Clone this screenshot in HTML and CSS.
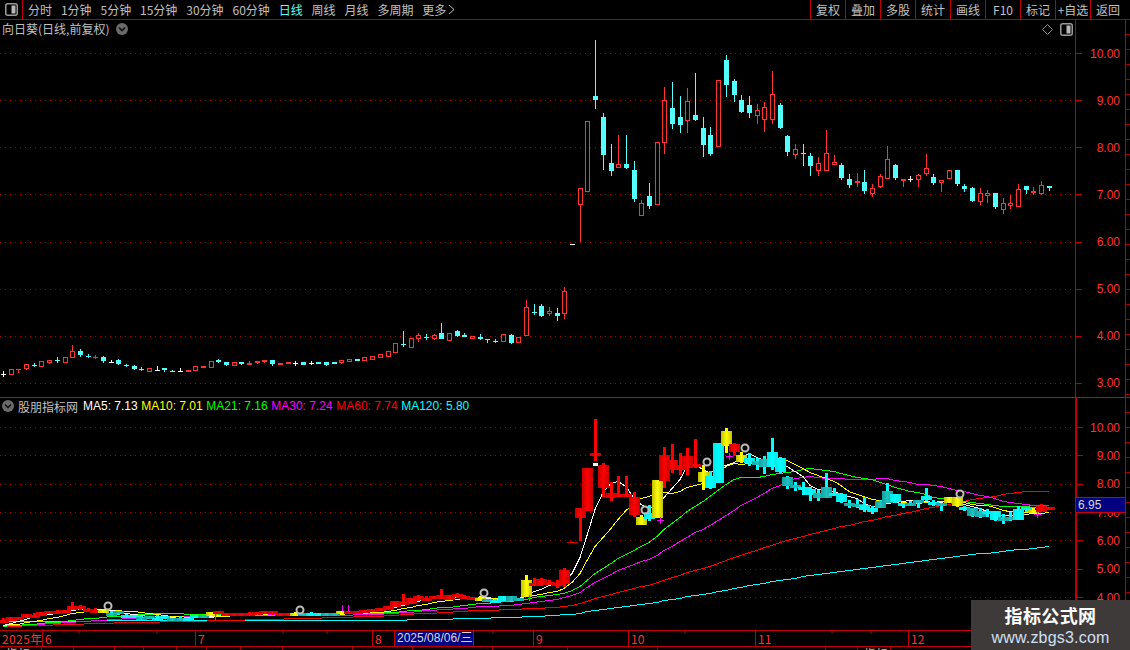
FILE: index.html
```html
<!DOCTYPE html>
<html lang="zh-CN">
<head>
<meta charset="utf-8">
<title>向日葵 日线</title>
<link rel="stylesheet" href="styles.css">
</head>
<body>
<div class="app">
  <header class="toolbar">
    <div class="panel-btn">
      <svg class="toggle" viewBox="0 0 13 13"><rect x="0.75" y="0.75" width="11.5" height="11.5" rx="2" fill="none" stroke="#9a9a9a" stroke-width="1.5"/><rect x="6.5" y="2.5" width="4" height="8" fill="#b8b8b8"/></svg>
    </div>
    <nav class="tabs">
      <span>分时</span><span>1分钟</span><span>5分钟</span><span>15分钟</span><span>30分钟</span><span>60分钟</span>
      <span class="active">日线</span><span>周线</span><span>月线</span><span>多周期</span>
      <span class="more">更多<svg class="more-arrow" viewBox="0 0 7 11"><path d="M1 1l5 4.5L1 10" fill="none" stroke="#c0c0c0"/></svg></span>
    </nav>
    <div class="actions">
      <button>复权</button><button>叠加</button><button>多股</button><button>统计</button><button>画线</button><button>F10</button><button>标记</button><button>+自选</button><button class="last">返回</button>
    </div>
  </header>

  <section class="pane pane-price">
    <div class="plot">
      <svg id="price" class="chart" width="1075" height="377" viewBox="0 20 1075 377"></svg>
      <div class="pane-title">向日葵(日线,前复权)
        <svg class="chev" viewBox="0 0 12 12"><circle cx="6" cy="6" r="6" fill="#6a6a6a"/><path d="M3 4.5l3 3 3-3" fill="none" stroke="#111" stroke-width="1.6"/></svg>
      </div>
      <div class="pane-tools">
        <svg class="diamond" viewBox="0 0 11 11"><path d="M5.5 .5l5 5-5 5-5-5z" fill="none" stroke="#8a8a8a"/></svg>
        <svg class="toggle" viewBox="0 0 13 13"><rect x="0.75" y="0.75" width="11.5" height="11.5" rx="2" fill="none" stroke="#9a9a9a" stroke-width="1.5"/><rect x="6.5" y="2.5" width="4" height="8" fill="#b8b8b8"/></svg>
      </div>
    </div>
    <div class="axis axis-price">
      <div>10.00</div><div>9.00</div><div>8.00</div><div>7.00</div><div>6.00</div><div>5.00</div><div>4.00</div><div>3.00</div>
    </div>
    <div class="edge"></div>
  </section>

  <section class="pane pane-ind">
    <div class="plot">
      <svg id="ind" class="chart" width="1075" height="232" viewBox="0 398 1075 232"></svg>
      <div class="legend">
        <svg class="chev" viewBox="0 0 12 12"><circle cx="6" cy="6" r="6" fill="#6a6a6a"/><path d="M3 4.5l3 3 3-3" fill="none" stroke="#111" stroke-width="1.6"/></svg>
        <span class="legend-name">股朋指标网</span>
        <span class="ma5">MA5: 7.13</span><span class="ma10">MA10: 7.01</span><span class="ma21">MA21: 7.16</span><span class="ma30">MA30: 7.24</span><span class="ma60">MA60: 7.74</span><span class="ma120">MA120: 5.80</span>
      </div>
    </div>
    <div class="axis axis-ind">
      <div>10.00</div><div>9.00</div><div>8.00</div><div>7.00</div><div>6.00</div><div>5.00</div><div>4.00</div>
      <span class="price-tag">6.95</span>
    </div>
    <div class="edge"></div>
  </section>

  <footer class="dates">
    <span class="seg first" style="flex-basis:42px">2025年</span>
    <span class="seg sep" style="flex-basis:153px">6</span>
    <span class="seg sep" style="flex-basis:177px">7</span>
    <span class="seg sep" style="flex-basis:22px">8</span>
    <span class="seg date-tag" style="flex-basis:79px">2025/08/06/三</span>
    <span class="seg sep" style="flex-basis:60px"></span>
    <span class="seg sep" style="flex-basis:95px">9</span>
    <span class="seg sep" style="flex-basis:127px">10</span>
    <span class="seg sep" style="flex-basis:153px">11</span>
    <span class="seg sep" style="flex-basis:222px">12</span>
    <svg class="date-ticks" width="1130" height="3"><path d="M79 0v3M157 0v3M283 0v3M327 0v3M493 0v3M685 0v3M832 0v3M871 0v3" stroke="#c00000"/></svg>
  </footer>
  <div class="subtabs">
    <span style="flex-basis:42px">指标</span><span style="flex-basis:32px">MA</span><span style="flex-basis:41px"></span><span style="flex-basis:29px"></span><span style="flex-basis:33px"></span><span style="flex-basis:30px"></span><span style="flex-basis:34px"></span><span style="flex-basis:42px"></span><span style="flex-basis:70px"></span><span style="flex-basis:60px"></span><span style="flex-basis:80px"></span><span style="flex-basis:75px"></span><span style="flex-basis:90px"></span><span style="flex-basis:168px"></span><span style="flex-basis:32px"></span><span style="flex-basis:33px">指标</span>
  </div>

  <aside class="watermark">
    <div class="wm-title">指标公式网</div>
    <div class="wm-url">www.zbgs3.com</div>
  </aside>
</div>
<script src="chart.js"></script>
</body>
</html>
```

FILE: styles.css
```css
* { box-sizing: border-box; }
html, body { margin: 0; padding: 0; background: #000; }
body { font-family: "Noto Sans CJK SC", "Liberation Sans", sans-serif; font-size: 12px; color: #c0c0c0; }
.app { position: relative; width: 1130px; height: 650px; overflow: hidden; background: #000; display: flex; flex-direction: column; }

.toolbar { height: 20px; flex: none; display: flex; align-items: stretch; border-bottom: 1px solid #b00000; }
.panel-btn { width: 23px; flex: none; border-right: 1px solid #c00000; display: flex; align-items: center; justify-content: center; }
.toggle { width: 13px; height: 13px; display: block; }
.tabs { display: flex; align-items: center; gap: 8.9px; padding-left: 5px; line-height: 19px; white-space: nowrap; }
.tabs .active { color: #54ffff; }
.more { display: flex; align-items: center; gap: 2px; }
.more-arrow { width: 7px; height: 11px; }
.actions { margin-left: auto; display: flex; }
.actions button { width: 35px; height: 19px; padding: 0; border: 0; border-left: 1px solid #c00000; background: none; color: #c0c0c0; font: inherit; line-height: 18px; white-space: nowrap; }
.actions .last { width: 40px; padding-right: 5px; }

.pane { position: relative; display: flex; flex: none; }
.pane-price { height: 378px; border-bottom: 1px solid #e00000; }
.pane-ind { height: 232px; }
.plot { position: relative; width: 1075px; flex: none; }
.chart { display: block; shape-rendering: crispEdges; }

.pane-title { position: absolute; left: 2px; top: 0; display: flex; align-items: center; gap: 7px; line-height: 17px; white-space: nowrap; }
.chev { width: 12px; height: 12px; flex: none; display: block; }
.pane-tools { position: absolute; right: 2px; top: 3px; display: flex; align-items: center; gap: 7px; }
.diamond { width: 11px; height: 11px; display: block; }

.legend { position: absolute; left: 2px; top: 0; display: flex; align-items: center; height: 16px; font-family: "Liberation Sans", sans-serif; white-space: nowrap; }
.legend span { margin-right: 3.6px; }
.legend .legend-name { font-family: "Noto Sans CJK SC", sans-serif; margin: 0 5px 0 4px; }
.ma5 { color: #fff; } .ma10 { color: #ff0; } .ma21 { color: #0f0; } .ma30 { color: #f0f; } .ma60 { color: #f00; } .ma120 { color: #0ff; }

.axis { position: relative; width: 50px; flex: none; border-left: 1px solid #c00000; font-family: "Liberation Sans", sans-serif; color: #ff3232; }
.axis-price { padding-top: 10px; }
.axis-ind { padding-top: 15.4px; border-left-width: 2px; border-left-color: #c00000; }
.axis > div { display: flex; align-items: center; justify-content: space-between; padding-right: 5px; }
.axis-price > div { height: 47.14px; }
.axis-ind > div { height: 28.33px; }
.axis > div::before { content: ""; width: 6px; height: 1px; background: #c00000; }
.price-tag { position: absolute; left: -1px; right: 0; top: 99px; height: 16px; padding-left: 2px; line-height: 14px; background: #000080; color: #d8d8d8; border-top: 1px solid #d00000; border-bottom: 1px solid #d00000; }
.edge { width: 5px; flex: none; border-left: 1px solid #c00000; background: repeating-linear-gradient(#000 0 14px, #a00000 14px 15px); }

.dates { position: relative; height: 17px; flex: none; display: flex; border-top: 1px solid #c00000; border-bottom: 1px solid #c00000; line-height: 15px; color: #ff3232; font-family: "Noto Sans CJK SC", "Liberation Sans", sans-serif; white-space: nowrap; }
.seg { flex: none; padding-left: 2px; overflow: hidden; }
.first { letter-spacing: .4px; }
.sep { border-left: 1px solid #c00000; }
.date-tag { background: #000080; color: #d8d8d8; border-left: 1px solid #c00000; font-family: "Liberation Sans", "Noto Sans CJK SC", sans-serif; }
.date-ticks { position: absolute; left: 0; top: 0; }
.subtabs { height: 3px; flex: none; display: flex; overflow: hidden; line-height: 14px; color: #c0c0c0; }
.subtabs span { flex: none; padding-left: 6px; border-right: 1px solid #a00000; overflow: hidden; white-space: nowrap; }

.watermark { position: absolute; right: 0; bottom: 0; width: 159px; height: 50px; background: #3e3a3a; display: flex; flex-direction: column; align-items: center; padding-top: 4px; }
.wm-title { color: #fff; font-size: 18px; letter-spacing: .4px; font-weight: 700; line-height: 23px; }
.wm-url { color: #d0e0f4; font-family: "Liberation Sans", sans-serif; font-size: 16px; letter-spacing: .2px; line-height: 21px; }
```

FILE: chart.js
```js
(function () {
  // i-th candle: [wickTop, wickBottom, bodyTop, bodyBottom, kind]  (price-pane pixel rows)
  // h = hollow red, c = cyan, w = white doji, r = solid red
  var D = [
    [371,377,374,374,'w'],[369,375,369,375,'h'],[369,373,369,370,'r'],[364,370,364,369,'h'],[363,367,365,365,'c'],[361,367,361,367,'h'],[360,364,360,363,'h'],[357,363,360,360,'c'],[357,363,357,363,'h'],[345,358,351,358,'h'],
    [349,357,351,355,'c'],[354,358,356,356,'c'],[355,359,357,357,'r'],[356,363,357,361,'c'],[360,362,362,362,'w'],[359,365,360,364,'c'],[364,367,365,365,'c'],[365,370,366,369,'c'],[367,371,369,369,'c'],[368,372,368,372,'h'],
    [366,370,370,370,'w'],[368,372,368,370,'c'],[370,371,371,371,'c'],[368,372,371,371,'w'],[370,372,370,372,'r'],[366,371,366,371,'h'],[366,368,366,368,'r'],[361,368,361,368,'h'],[359,363,360,362,'c'],[362,366,362,365,'c'],
    [362,366,362,366,'h'],[362,365,362,364,'c'],[361,365,363,365,'r'],[361,364,361,363,'r'],[360,363,360,362,'r'],[360,366,360,364,'c'],[363,365,363,365,'r'],[362,364,362,364,'r'],[361,366,363,363,'w'],[362,365,362,365,'c'],
    [361,365,363,363,'w'],[362,364,362,364,'c'],[362,366,362,365,'c'],[362,364,362,364,'c'],[360,364,360,363,'h'],[359,362,359,362,'h'],[359,361,359,361,'c'],[357,361,357,361,'h'],[356,360,356,360,'h'],[354,358,354,358,'h'],
    [351,357,351,357,'h'],[343,353,343,353,'h'],[331,347,344,344,'c'],[338,348,338,348,'h'],[333,342,335,339,'h'],[334,340,337,337,'c'],[334,340,335,339,'h'],[323,339,333,339,'c'],[333,341,333,341,'h'],[330,337,331,336,'c'],
    [333,337,335,337,'c'],[336,339,336,339,'h'],[334,340,337,339,'c'],[339,343,339,339,'c'],[339,343,341,341,'c'],[334,342,334,342,'h'],[334,344,335,343,'c'],[337,343,337,343,'h'],[300,336,307,336,'h'],[304,315,312,312,'c'],
    [304,317,306,316,'c'],[307,316,311,314,'h'],[308,321,313,316,'c'],[287,319,291,314,'h'],[244,244,244,245,'w'],[188,242,188,205,'h'],[121,192,121,192,'h'],[40,109,96,100,'c'],[113,170,117,155,'c'],[144,176,163,171,'c'],
    [135,168,164,168,'h'],[135,169,164,168,'c'],[161,202,170,199,'c'],[200,216,203,216,'h'],[183,209,196,206,'c'],[142,205,142,205,'h'],[87,154,100,143,'h'],[82,129,108,124,'c'],[96,133,117,125,'c'],[88,133,101,121,'h'],
    [73,121,115,120,'c'],[117,157,128,145,'c'],[127,156,135,154,'c'],[80,147,80,147,'h'],[55,97,60,85,'c'],[79,102,81,95,'c'],[95,113,100,112,'c'],[96,118,105,113,'c'],[104,124,110,116,'h'],[102,132,107,120,'h'],
    [71,124,94,120,'h'],[103,129,105,128,'c'],[135,156,136,152,'c'],[144,159,149,155,'h'],[144,166,153,153,'c'],[153,176,156,166,'c'],[157,176,163,171,'h'],[130,171,153,171,'h'],[155,165,162,165,'h'],[163,180,165,178,'c'],
    [174,188,179,185,'c'],[173,187,181,183,'h'],[170,194,182,191,'c'],[184,197,188,194,'h'],[174,188,176,187,'h'],[146,179,159,179,'h'],[164,180,165,178,'c'],[179,187,179,181,'r'],[176,182,179,179,'w'],[174,187,175,180,'h'],
    [154,176,168,174,'h'],[174,185,177,183,'c'],[180,192,180,183,'h'],[170,179,170,179,'h'],[170,186,170,184,'c'],[184,192,186,189,'c'],[187,202,188,201,'c'],[188,205,193,202,'h'],[190,203,193,196,'h'],[193,209,193,207,'c'],
    [198,214,203,210,'h'],[195,209,203,206,'h'],[184,207,189,207,'h'],[186,194,186,190,'c'],[187,195,191,193,'r'],[181,195,185,194,'h'],[186,191,186,188,'c']
  ];
  var NS = 'http://www.w3.org/2000/svg';
  var RED = '#ff3232', CYAN = '#54ffff';
  var K = 28.33 / 47.14;
  function cx(i) { return Math.round(3 + 7.69 * i); }
  function low(u) { return 427 + (u - 53) * K; }
  function el(parent, name, attrs) {
    var e = document.createElementNS(NS, name);
    for (var k in attrs) e.setAttribute(k, attrs[k]);
    parent.appendChild(e);
    return e;
  }
  function rect(p, x, y, w, h, fill) { return el(p, 'rect', { x: x, y: y, width: w, height: h, fill: fill }); }
  function grid(svg, y0, step, n) {
    for (var i = 0; i < n; i++) {
      var y = Math.round(y0 + step * i) + 0.5;
      el(svg, 'line', { x1: 0, x2: 1075, y1: y, y2: y, stroke: '#a00000', 'stroke-dasharray': '1 4' });
    }
  }

  /* ---------- price pane ---------- */
  var price = document.getElementById('price');
  grid(price, 53, 47.14, 8);
  D.forEach(function (d, i) {
    var x = cx(i), col = d[4] === 'c' ? CYAN : d[4] === 'w' ? '#fff' : RED;
    rect(price, x, d[0], 1, Math.max(d[1] - d[0], 1), col);
    if (d[4] === 'h') {
      el(price, 'rect', { x: x - 1.5, y: d[2] + 0.5, width: 4, height: Math.max(d[3] - d[2] - 1, 1), fill: '#000', stroke: RED });
    } else {
      rect(price, x - 2, d[2], 5, Math.max(d[3] - d[2], 1), col);
    }
  });

  /* ---------- indicator pane ---------- */
  var ind = document.getElementById('ind');
  var defs = el(ind, 'defs', {});
  function gradient(id, edge, mid) {
    var g = el(defs, 'linearGradient', { id: id });
    el(g, 'stop', { offset: '0', 'stop-color': edge });
    el(g, 'stop', { offset: '0.5', 'stop-color': mid });
    el(g, 'stop', { offset: '1', 'stop-color': edge });
  }
  gradient('g-r', '#c80000', '#ff0000');
  gradient('g-y', '#c0c000', '#ffff00');
  gradient('g-t', '#10a0a0', '#20c0c0');
  gradient('g-c', '#00e8e8', '#00ffff');
  grid(ind, 427, 28.33, 7);

  // moving averages computed from closes, with earlier history padded in
  var closes = [];
  for (var p = 0; p < 120; p++) closes.push(p < 60 ? 367 : 384);
  D.forEach(function (d) {
    closes.push(d[4] === 'h' ? d[2] : d[4] === 'c' ? d[3] : (d[2] + d[3]) / 2);
  });
  [[120, '#00ffff'], [60, '#ff0000'], [30, '#ff00ff'], [21, '#00ff00'], [10, '#ffff00'], [5, '#ffffff']].forEach(function (m) {
    var pts = [];
    D.forEach(function (d, i) {
      var s = 0;
      for (var k = 0; k < m[0]; k++) s += closes[120 + i - k];
      pts.push(cx(i) + ',' + (Math.round(low(s / m[0])) + 0.5));
    });
    el(ind, 'polyline', { points: pts.join(' '), fill: 'none', stroke: m[1], 'stroke-width': 1 });
  });

  function colour(i) {
    var Y = { 13: 1, 27: 1, 38: 1, 44: 1, 62: 1, 68: 1, 83: 1, 85: 1, 91: 1, 94: 1, 96: 1, 123: 1, 124: 1, 134: 1 };
    if (Y[i]) return 'y';
    var cyanRanges = [[14, 26], [39, 43], [63, 67], [84, 84], [92, 93], [97, 122], [125, 133]];
    for (var r = 0; r < cyanRanges.length; r++) {
      if (i >= cyanRanges[r][0] && i <= cyanRanges[r][1]) return (i === 93 || i % 4 < 2) ? 'c' : 't';
    }
    return 'r';
  }
  var WICK = { r: '#ff0000', y: '#ffff00', c: '#00ffff', t: '#00ffff' };
  D.forEach(function (d, i) {
    var x = cx(i), c = colour(i);
    var wt = Math.round(low(d[0])), wb = Math.round(low(d[1]));
    var bt = Math.round(low(d[2])), bb = Math.round(low(d[3]));
    var h = i === 74 ? 1 : Math.max(bb - bt, 3);
    if (wb - wt > 1) rect(ind, x - 1, wt, 3, wb - wt, WICK[c]);
    rect(ind, x - 5, bt, 11, h, 'url(#g-' + c + ')');
  });

  [[108, 606], [300, 610], [484, 593], [645, 510], [707, 462], [745, 448], [960, 494]].forEach(function (m) {
    el(ind, 'circle', { cx: m[0], cy: m[1], r: 3.5, fill: 'none', stroke: '#bdbdbd', 'stroke-width': 2, 'shape-rendering': 'auto' });
  });
  [[660, 520], [729, 456], [1037, 514]].forEach(function (m) {
    rect(ind, m[0] - 3, m[1], 7, 1, '#ff00ff');
    rect(ind, m[0], m[1] - 3, 1, 7, '#ff00ff');
  });
  [[342, 608], [348, 608], [215, 617], [529, 598]].forEach(function (m) {
    rect(ind, m[0], m[1] - 3, 1, 6, '#ff00ff');
  });
  rect(ind, 593, 463, 5, 3, '#ffffff');
})();
```
